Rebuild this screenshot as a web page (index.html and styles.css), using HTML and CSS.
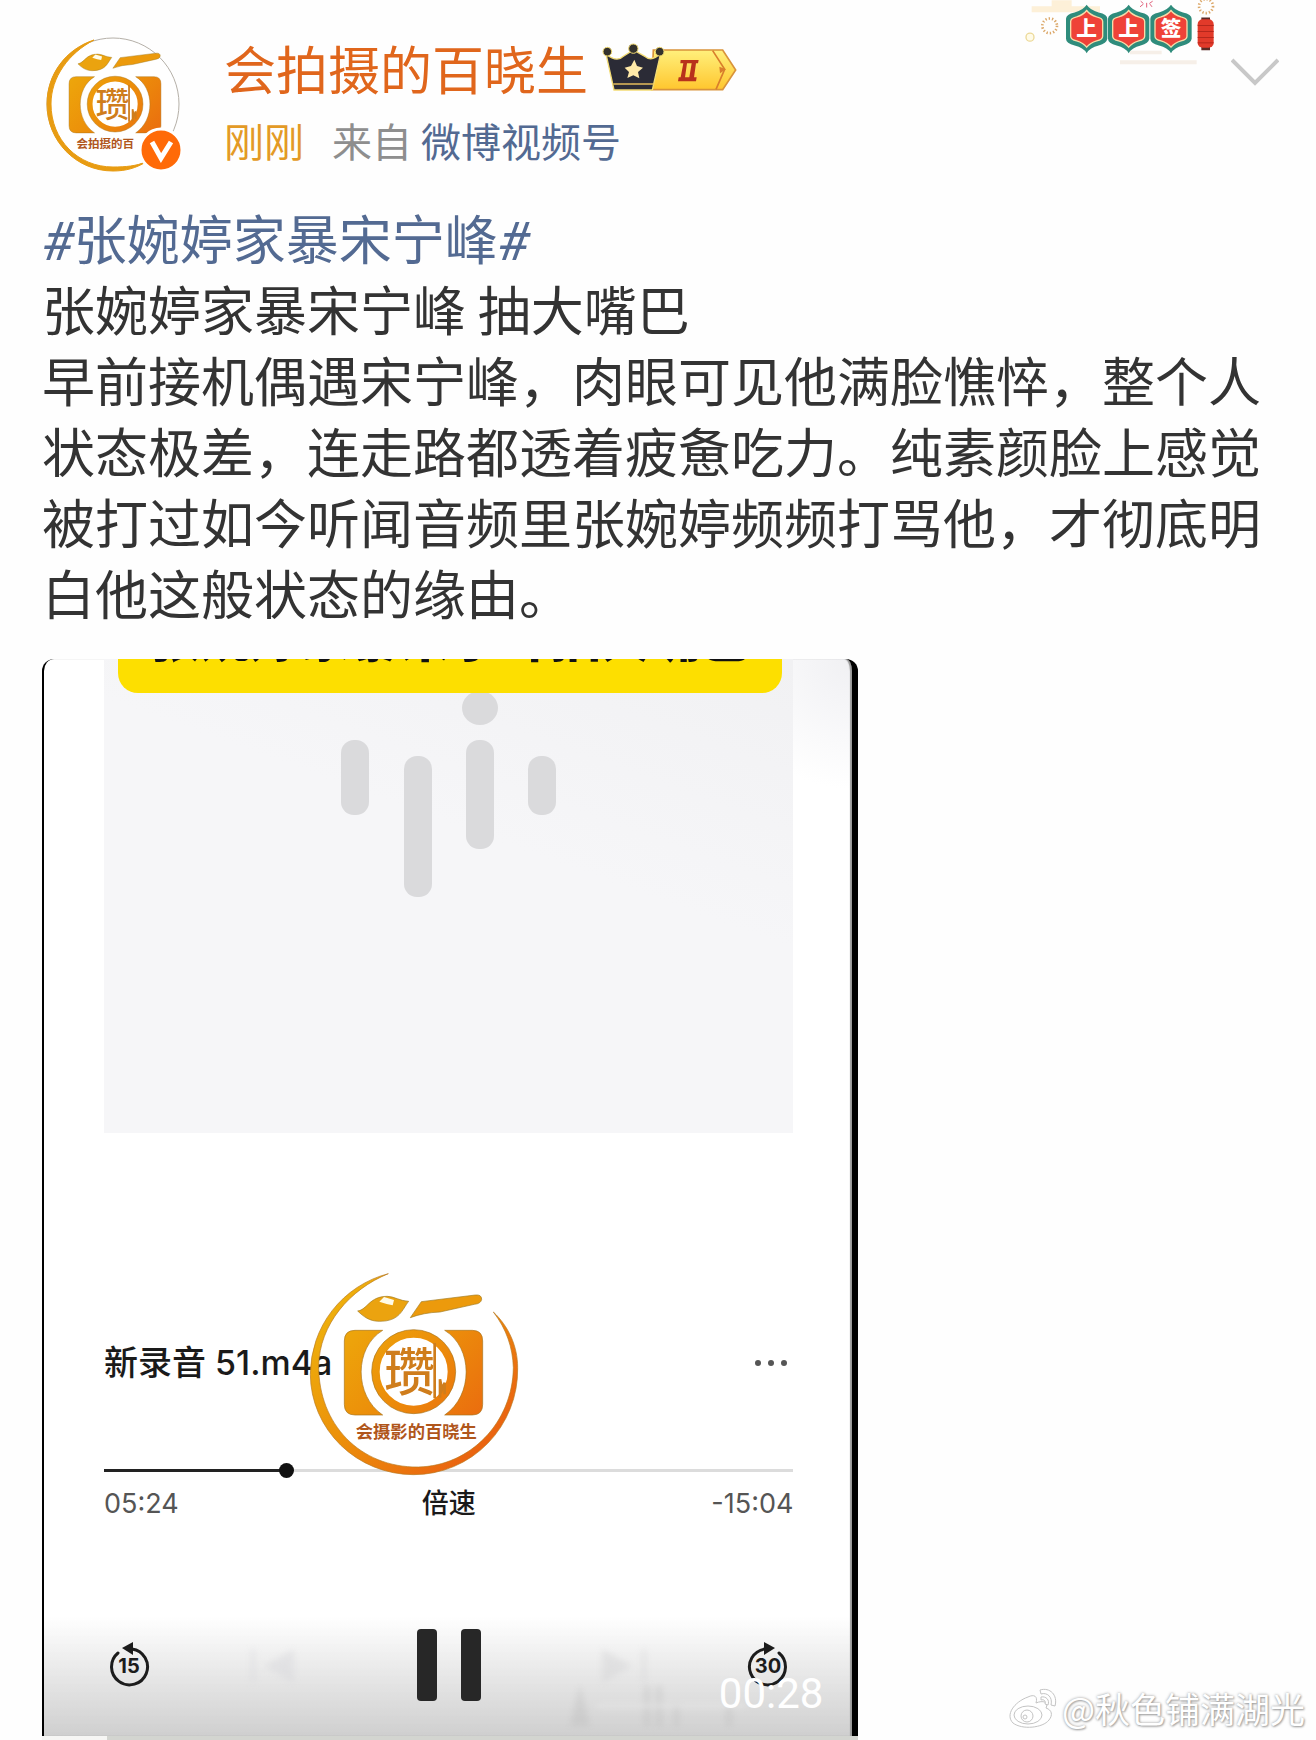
FILE: index.html
```
<!DOCTYPE html>
<html lang="zh-CN">
<head>
  <meta charset="UTF-8">
  <meta name="viewport" content="width=device-width, initial-scale=1.0">
  <title>微博正文</title>
  <link rel="stylesheet" href="styles.css">
</head>
<body>

  <!-- Shared camera logo -->
  <svg class="defs" width="0" height="0" aria-hidden="true">
    <defs>
      <linearGradient id="gold" gradientUnits="userSpaceOnUse" x1="120" y1="100" x2="600" y2="560">
        <stop offset="0" stop-color="#eeb40c"/>
        <stop offset="0.5" stop-color="#ec910a"/>
        <stop offset="1" stop-color="#ea6410"/>
      </linearGradient>
      <g id="camera">
        <path d="M203 180C232 176 238 136 292 136C312 136 330 150 356 151C336 176 330 211 268 211C238 211 220 196 203 180Z" fill="#eba30f" stroke="#a07a20" stroke-width="2"/>
        <path d="M268 152L282 138L312 147L308 163L290 159Z" fill="#fffbe8"/>
        <path d="M361 200L394 152L556 132Q575 130 575 145Q573 158 553 160L450 183Q400 185 361 200Z" fill="#ec9a0c" stroke="#a07a20" stroke-width="2"/>
        <path d="M195 238H278C192 290 192 434 278 492H195Q163 492 163 460V270Q163 238 195 238Z" fill="url(#gold)" stroke="#a8741c" stroke-width="2"/>
        <path d="M547 238H464C550 290 550 434 464 492H547Q578 492 578 460V270Q578 238 547 238Z" fill="url(#gold)" stroke="#a8741c" stroke-width="2"/>
        <circle cx="371" cy="362" r="114" fill="#fff" stroke="url(#gold)" stroke-width="24"/>
        <circle cx="371" cy="362" r="126" fill="none" stroke="#a8741c" stroke-width="2"/>
        <text class="seal" x="282" y="420">瓒</text>
        <path d="M434 276V442M450 440V385L456 415L464 395V430" fill="none" stroke="#cf7d1c" stroke-width="8"/>
      </g>
    </defs>
  </svg>

  <article class="post">
    <header class="post-header">
      <a class="avatar" href="#" aria-label="会拍摄的百晓生">
        <svg viewBox="0 0 144 140" width="144" height="140">
          <circle cx="71" cy="70" r="66" fill="#fff" stroke="#b5b0a8" stroke-width="1"/>
          <path d="M52 6C24 15 5 40 5 70C5 107 34 137 71 137C84 137 94 134 104 128C94 132 84 133 71 133C36 133 9 106 9 70C9 43 27 19 52 6Z" fill="#e89c12" stroke="#e89c12"/>
          <g transform="translate(-9 -10) scale(0.2213)">
            <use href="#camera"/>
            <text class="logo-name" x="197" y="562">会拍摄的百</text>
          </g>
          <circle cx="119" cy="116" r="21" fill="#ff6a08" stroke="#fff" stroke-width="3"/>
          <path d="M110 108L119 124L129 108" fill="none" stroke="#fff" stroke-width="5"/>
        </svg>
      </a>

      <div class="author">
        <div class="author-line">
          <a class="author-name" href="#">会拍摄的百晓生</a>
          <svg class="vip" viewBox="606 75 408 150" width="136" height="50" aria-label="VIP II">
            <defs>
              <linearGradient id="vipGold" x1="0" y1="0" x2="0" y2="1">
                <stop offset="0" stop-color="#fff07c"/>
                <stop offset="1" stop-color="#ffc62e"/>
              </linearGradient>
            </defs>
            <path d="M760 96H968L1007 156L968 215H755Z" fill="url(#vipGold)" stroke="#d9933a" stroke-width="5"/>
            <path d="M938 98L974 154L948 214" fill="none" stroke="#d97e2c" stroke-width="5"/>
            <path d="M958 146L978 154L960 166Z" fill="#d97e2c"/>
            <path d="M618 108Q650 134 668 116L700 96L736 116Q756 132 782 106L757 216H642Z" fill="#2b2b36" stroke="#f3dc74" stroke-width="4"/>
            <path d="M640 198H761" stroke="#e4bd5c" stroke-width="5"/>
            <circle cx="622" cy="101" r="13" fill="#33312c" stroke="#f0d870" stroke-width="3"/>
            <circle cx="700" cy="92" r="14" fill="#33312c" stroke="#f0d870" stroke-width="3"/>
            <circle cx="779" cy="101" r="13" fill="#33312c" stroke="#f0d870" stroke-width="3"/>
            <path d="M703 125L711 144L729 149L714 162L718 181L700 172L682 180L687 162L674 149L693 144Z" fill="#ffe9a8"/>
            <path d="M842 126H896L894 136H888L882 178H890L888 190H834L836 178H842L850 136H841ZM861 136L855 178H868L875 136Z" fill="#b8321c" fill-rule="evenodd"/>
          </svg>
        </div>
        <div class="meta">
          <time class="time">刚刚</time>
          <span class="from">来自 <a href="#">微博视频号</a></span>
        </div>
      </div>

      <!-- Festival card -->
      <svg class="festival" viewBox="60 0 600 200" width="200" height="67">
        <path d="M95 18H155V0H215V18H300V36H95Z" fill="#fdf0d8"/>
        <path d="M360 180H590V192H360ZM390 152H485V162H390Z" fill="#f6efe8"/>
        <circle cx="90" cy="111" r="12" fill="#fffbe8" stroke="#ecd998" stroke-width="4"/>
        <circle cx="149" cy="77" r="22" fill="none" stroke="#dba768" stroke-width="8" stroke-dasharray="4 6"/>
        <circle cx="618" cy="18" r="21" fill="none" stroke="#dba768" stroke-width="8" stroke-dasharray="4 6"/>
        <path d="M422 3L430 10M440 8V22M458 3L448 10M420 20L430 12M456 20L450 12" stroke="#e0607a" stroke-width="3"/>
        <g id="plaque">
          <path d="M260 14Q270 30 296 37Q322 42 322 56V116Q320 130 296 136Q270 142 260 159Q250 142 224 136Q198 130 198 116V56Q198 42 224 37Q250 30 260 14Z" fill="#2f8c7c"/>
          <path d="M260 31Q270 44 290 50Q308 54 308 64V108Q308 118 290 122Q270 128 260 141Q250 128 230 122Q212 118 212 108V64Q212 54 230 50Q250 44 260 31Z" fill="#ef4238" stroke="#f8dba8" stroke-width="4"/>
        </g>
        <use href="#plaque" x="126"/>
        <use href="#plaque" x="253"/>
        <text class="plaque-text" x="229" y="109">上</text>
        <text class="plaque-text" x="355" y="109">上</text>
        <text class="plaque-text" x="482" y="109">签</text>
        <path d="M604 52H630V60H604ZM604 140H630V150H604Z" fill="#5c2b25"/>
        <rect x="593" y="57" width="48" height="86" rx="15" fill="#e23a2a"/>
        <path d="M593 76H641M593 94H641M593 112H641M593 128H641" stroke="#b5271c" stroke-width="3"/>
      </svg>

      <button class="more" type="button" aria-label="更多">
        <svg viewBox="0 0 48 28" width="48" height="28">
          <path d="M1 2L24 25L47 2" fill="none" stroke="#c8c8c8" stroke-width="4"/>
        </svg>
      </button>
    </header>

    <div class="post-text">
      <p><a href="#"><i>#</i>张婉婷家暴宋宁峰<i>#</i></a></p>
      <p>张婉婷家暴宋宁峰 抽大嘴巴</p>
      <p>早前接机偶遇宋宁峰，肉眼可见他满脸憔悴，整个人状态极差，连走路都透着疲惫吃力。纯素颜脸上感觉被打过如今听闻音频里张婉婷频频打骂他，才彻底明白他这般状态的缘由。</p>
    </div>

    <!-- Video frame -->
    <section class="video">
      <div class="wave-panel">
        <div class="banner">张婉婷家暴宋宁峰抽大嘴巴</div>
        <svg class="wave" viewBox="0 0 240 204" width="240" height="204" fill="#dadadc">
          <ellipse cx="140" cy="15" rx="18" ry="17"/>
          <rect x="1" y="47" width="28" height="75" rx="13"/>
          <rect x="64" y="63" width="28" height="141" rx="13"/>
          <rect x="126" y="47" width="28" height="109" rx="13"/>
          <rect x="188" y="63" width="28" height="59" rx="13"/>
        </svg>
      </div>

      <div class="file-row">
        <span class="file-name">新录音 51.m4a</span>
        <button class="dots" type="button" aria-label="选项">
          <svg viewBox="0 0 34 8" width="34" height="8" fill="#555">
            <circle cx="4" cy="4" r="3"/><circle cx="17" cy="4" r="3"/><circle cx="30" cy="4" r="3"/>
          </svg>
        </button>
      </div>

      <input class="seek" type="range" min="0" max="100" value="26" aria-label="播放进度">

      <div class="times">
        <span>05:24</span>
        <button class="speed" type="button">倍速</button>
        <span class="left-time">-15:04</span>
      </div>

      <div class="controls">
        <button type="button" aria-label="后退15秒">
          <svg viewBox="0 0 44 48" width="44" height="48">
            <path d="M11 12A18 18 0 1 0 25 8" fill="none" stroke="#1c1c1c" stroke-width="3" stroke-linecap="round"/>
            <path d="M15 7L26 1V14Z" fill="#1c1c1c"/>
            <text class="skip" x="22" y="32">15</text>
          </svg>
        </button>
        <button type="button" aria-label="上一个">
          <svg class="ghost" viewBox="0 0 72 48" width="72" height="48" fill="#d3d3d8">
            <path d="M3 8H7V42H3ZM16 25L46 8V42Z"/>
          </svg>
        </button>
        <button type="button" aria-label="暂停">
          <svg viewBox="0 0 64 74" width="64" height="74" fill="#272727">
            <rect x="0" y="1" width="20" height="72" rx="4"/>
            <rect x="44" y="1" width="20" height="72" rx="4"/>
          </svg>
        </button>
        <button type="button" aria-label="下一个">
          <svg class="ghost" viewBox="0 0 72 48" width="72" height="48" fill="#cfcfd1">
            <path d="M24 8L54 25L24 42ZM64 8H68V42H64Z"/>
          </svg>
        </button>
        <button type="button" aria-label="前进30秒">
          <svg viewBox="0 0 44 48" width="44" height="48">
            <path d="M33 12A18 18 0 1 1 19 8" fill="none" stroke="#1c1c1c" stroke-width="3" stroke-linecap="round"/>
            <path d="M29 7L18 1V14Z" fill="#1c1c1c"/>
            <text class="skip" x="22" y="32">30</text>
          </svg>
        </button>
      </div>

      <svg class="logo" viewBox="0 0 780 720" width="260" height="240">
        <path d="M295 68A312 312 0 0 0 61 370A310 303 0 0 0 370 671A312 315 0 0 0 683 350C683 285 655 225 610 183C650 235 668 290 670 350C668 515 540 645 385 648C210 650 86 520 86 345C88 220 180 115 295 68Z" fill="url(#gold)" stroke="#b8791e" stroke-width="2"/>
        <use href="#camera"/>
        <text class="logo-name" x="197" y="562">会摄影的百晓生</text>
      </svg>
      <svg class="smear" viewBox="0 0 190 44" width="190" height="44">
        <path d="M14 0L24 42H4ZM78 2H84V42H78ZM90 2H96V42H90ZM108 20H113V42H108ZM160 20H166V42H160Z" fill="#b5b5b5"/>
        <path d="M30 22H180" stroke="#fff" stroke-width="3"/>
      </svg>
      <time class="duration">00:28</time>
    </section>
    <div class="next-strip"></div>
  </article>

  <div class="watermark">
    <svg viewBox="0 0 50 42" width="50" height="42" fill="#fff" stroke="#c4c4c4">
      <path d="M20 10C26 7 30 9 28 16C35 13 41 15 38 21C44 23 45 28 41 33C35 41 14 43 5 36C-3 28 6 15 20 10Z"/>
      <ellipse cx="20" cy="28" rx="14" ry="9"/>
      <circle cx="19" cy="29" r="6"/>
      <circle cx="17" cy="30" r="2"/>
      <path d="M32 3C42 0 50 8 47 19L43 18C45 10 39 5 33 7ZM33 10C38 9 42 13 40 18L37 17C38 14 36 12 33 13Z"/>
    </svg>
    <span>@秋色铺满湖光</span>
  </div>

</body>
</html>
```
FILE: styles.css
```
/* Base */
* {
  box-sizing: border-box;
}
body {
  margin: 0;
  position: relative;
  background-color: #fefefe;
  color: #333;
  font-family: "Noto Sans CJK SC", sans-serif;
}
a {
  color: #536a92;
  text-decoration: none;
}
p {
  margin: 0;
}
button {
  padding: 0;
  border: none;
  background: none;
  color: inherit;
  font: inherit;
  cursor: pointer;
}
svg {
  display: block;
  flex-shrink: 0;
}
.defs {
  position: absolute;
}

/* Header */
.post {
  padding: 0 37px 0 42px;
}
.post-header {
  display: flex;
  align-items: flex-start;
  padding-bottom: 28px;
}
.avatar {
  margin-top: 34px;
}
.author {
  margin: 38px auto 0 38px;
}
.author-line {
  display: flex;
  align-items: center;
  gap: 14px;
}
.author-name {
  color: #e0661c;
  font-size: 52px;
  line-height: 60px;
}
.meta {
  display: flex;
  gap: 28px;
  margin-top: 18px;
  color: #8e8e8e;
  font-size: 40px;
  line-height: 48px;
}
.time {
  color: #e39a26;
}
.festival {
  margin-right: 11px;
}
.more {
  margin-top: 58px;
}

/* Text */
.post-text {
  font-size: 53px;
  line-height: 71px;
}
.post-text i {
  font-family: Roboto, sans-serif;
  line-height: 1;
}

/* Video frame */
.video {
  position: relative;
  width: 66%;
  margin-top: 31px;
  padding: 0 59px 33px 60px;
  overflow: hidden;
  border: solid #000;
  border-width: 0 6px 0 2px;
  border-radius: 12px 12px 0 0;
  background:
    linear-gradient(to bottom, transparent calc(100% - 120px), #cfcfcf),
    radial-gradient(circle at 100% 0, #f0f0f3, #fff 130px);
  box-shadow: inset -2px 0 1px #999;
}
.wave-panel {
  display: flow-root;
  height: 474px;
  padding: 0 11px 0 14px;
  background: linear-gradient(200deg, #f1f1f3, #f6f6f8 40%);
}
.banner {
  margin-top: -48px;
  padding-bottom: 34px;
  border-radius: 0 0 20px 20px;
  background-color: #fddf00;
  color: #111;
  font-size: 50px;
  font-weight: 900;
  line-height: 48px;
  text-align: center;
  white-space: nowrap;
}
.wave {
  margin-left: 222px;
}
.file-row {
  display: flex;
  align-items: center;
  justify-content: space-between;
  margin-top: 206px;
  color: #1a1a1a;
  font-family: Inter, "Noto Sans CJK SC", sans-serif;
  font-size: 34px;
  font-weight: 500;
  line-height: 48px;
}
.dots {
  margin-right: 5px;
}
.seek {
  display: block;
  width: 100%;
  height: 16px;
  margin: 75px 0 0;
  appearance: none;
  background: linear-gradient(to right, #222 26%, #dcdcdc 26%) center / 100% 3px no-repeat;
}
.seek::-webkit-slider-thumb {
  appearance: none;
  width: 15px;
  height: 15px;
  border-radius: 50%;
  background-color: #111;
}
.times {
  display: grid;
  grid-template-columns: 1fr auto 1fr;
  margin-top: 10px;
  color: #555;
  font-family: Inter, "Noto Sans CJK SC", sans-serif;
  font-size: 27px;
  line-height: 32px;
}
.speed {
  color: #1a1a1a;
  font-weight: 500;
}
.left-time {
  text-align: right;
}
.controls {
  display: flex;
  align-items: center;
  justify-content: space-between;
  height: 76px;
  margin-top: 107px;
  padding: 0 3px;
}
.skip {
  fill: #1c1c1c;
  font: 700 20px Inter, sans-serif;
  text-anchor: middle;
}
.ghost {
  filter: blur(3px);
  opacity: 0.4;
}

/* Overlays on the frame */
.logo {
  position: absolute;
  top: 592px;
  left: 246px;
}
.seal {
  fill: #cf7d1c;
  font-size: 152px;
  font-weight: 500;
}
.logo-name {
  fill: #b0561c;
  font-size: 52px;
  font-weight: 700;
}
.smear {
  position: absolute;
  right: 96px;
  bottom: 8px;
  filter: blur(3px);
  opacity: 0.3;
}
.duration {
  position: absolute;
  right: 29px;
  bottom: 18px;
  color: #fff;
  font-family: Roboto, sans-serif;
  font-size: 42px;
  line-height: 48px;
}
.next-strip {
  width: 66%;
  height: 4px;
  background: linear-gradient(to right, #f6f6f4 65px, #d3d5d0 65px);
}
.plaque-text {
  fill: #fff;
  font-size: 62px;
  font-weight: 900;
}

/* Watermark */
.watermark {
  position: absolute;
  right: 11px;
  bottom: 8px;
  display: flex;
  align-items: center;
  gap: 4px;
  color: #fff;
  font-size: 35px;
  line-height: 48px;
  text-shadow: 0 0 3px #999, 1px 1px 2px #aaa;
}
```
